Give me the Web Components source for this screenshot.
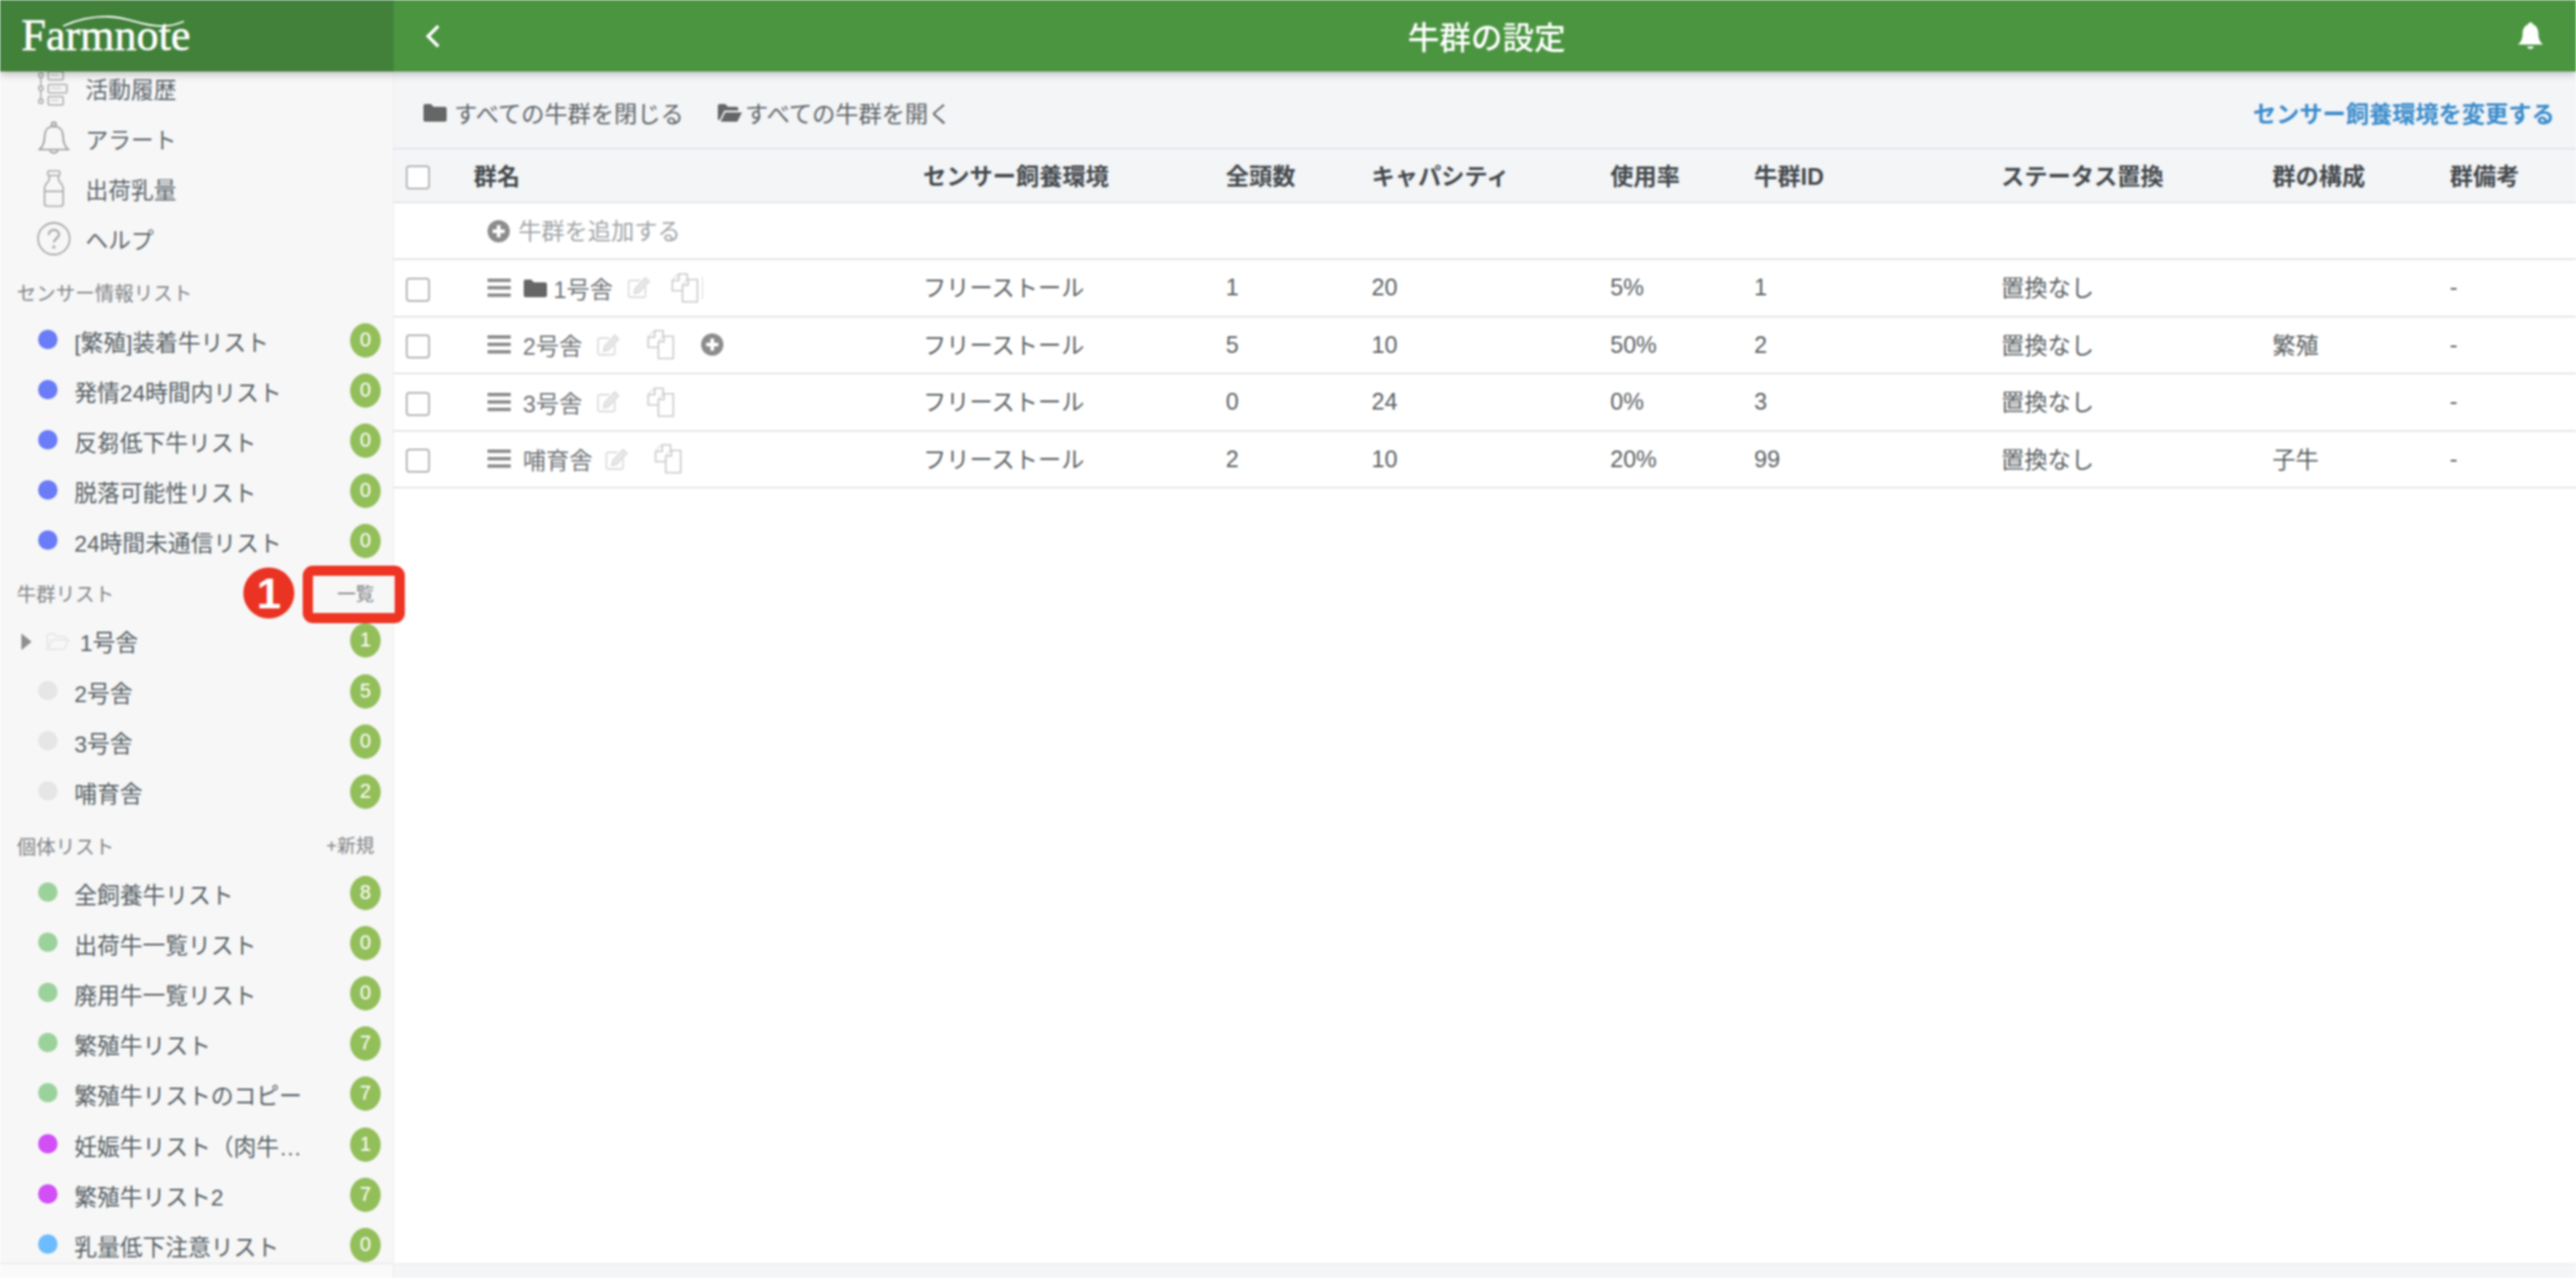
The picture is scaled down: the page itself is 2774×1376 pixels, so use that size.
<!DOCTYPE html>
<html lang="ja"><head><meta charset="utf-8"><title>牛群の設定</title>
<style>
html,body{margin:0;padding:0;height:100%;overflow:hidden;background:#fff}
body{font-family:"Liberation Sans","Noto Sans CJK JP",sans-serif;color:#555}
</style></head><body>
<farm-app>
  <farm-topbar slot="top" title="牛群の設定"></farm-topbar>
  <farm-sidebar slot="side">
    <side-nav icon="timeline">活動履歴</side-nav>
    <side-nav icon="bell">アラート</side-nav>
    <side-nav icon="bottle">出荷乳量</side-nav>
    <side-nav icon="help">ヘルプ</side-nav>
    <side-head h="56">センサー情報リスト</side-head>
    <side-row color="#6a7cf7" count="0">[繁殖]装着牛リスト</side-row>
    <side-row color="#6a7cf7" count="0">発情24時間内リスト</side-row>
    <side-row color="#6a7cf7" count="0">反芻低下牛リスト</side-row>
    <side-row color="#6a7cf7" count="0">脱落可能性リスト</side-row>
    <side-row color="#6a7cf7" count="0">24時間未通信リスト</side-row>
    <side-head h="52" action="一覧" marked>牛群リスト</side-head>
    <side-row folder count="1" style="height:55.500px">1号舎</side-row>
    <side-row color="#e6e6e6" count="5">2号舎</side-row>
    <side-row color="#e6e6e6" count="0">3号舎</side-row>
    <side-row color="#e6e6e6" count="2">哺育舎</side-row>
    <side-head h="54" action="+新規">個体リスト</side-head>
    <side-row color="#9bd29b" count="8">全飼養牛リスト</side-row>
    <side-row color="#9bd29b" count="0">出荷牛一覧リスト</side-row>
    <side-row color="#9bd29b" count="0">廃用牛一覧リスト</side-row>
    <side-row color="#9bd29b" count="7">繁殖牛リスト</side-row>
    <side-row color="#9bd29b" count="7">繁殖牛リストのコピー</side-row>
    <side-row color="#d14ff5" count="1">妊娠牛リスト（肉牛…</side-row>
    <side-row color="#d14ff5" count="7">繁殖牛リスト2</side-row>
    <side-row color="#6cbcff" count="0">乳量低下注意リスト</side-row>
  </farm-sidebar>
  <herd-main slot="main">
    <herd-toolbar></herd-toolbar>
    <herd-row head name="群名" env="センサー飼養環境" total="全頭数" cap="キャパシティ" rate="使用率" hid="牛群ID" status="ステータス置換" comp="群の構成" note="群備考"></herd-row>
    <herd-add>牛群を追加する</herd-add>
    <herd-row name="1号舎" folder caret gap1="15" gap2="21" env="フリーストール" total="1" cap="20" rate="5%" hid="1" status="置換なし" comp="" note="-"></herd-row>
    <herd-row name="2号舎" plus gap1="15" gap2="28" env="フリーストール" total="5" cap="10" rate="50%" hid="2" status="置換なし" comp="繁殖" note="-"></herd-row>
    <herd-row name="3号舎" gap1="15" gap2="28" env="フリーストール" total="0" cap="24" rate="0%" hid="3" status="置換なし" comp="" note="-"></herd-row>
    <herd-row name="哺育舎" gap1="13" gap2="27" env="フリーストール" total="2" cap="10" rate="20%" hid="99" status="置換なし" comp="子牛" note="-"></herd-row>
  </herd-main>
</farm-app>
<script>
const ICON={
 timeline:`<svg width="34" height="38" viewBox="0 0 34 38" fill="none" stroke="#aaa" stroke-width="1.6"><path d="M3 5v28"/><circle cx="3" cy="5" r="2.4" fill="#f7f7f7"/><circle cx="3" cy="19" r="2.4" fill="#f7f7f7"/><circle cx="3" cy="33" r="2.4" fill="#f7f7f7"/><rect x="11" y="1" width="16" height="9" rx="1"/><rect x="11" y="15" width="20" height="9" rx="1"/><rect x="11" y="28" width="16" height="9" rx="1"/><path d="M14 5h8M14 19h11M14 32h8" stroke="#ccc"/></svg>`,
 bell:`<svg width="34" height="38" viewBox="0 0 34 38" fill="none" stroke="#999" stroke-width="1.7"><circle cx="17" cy="4" r="2.4"/><path d="M17 6c-7 0-10 5-10 11 0 7-2 11-5.500 14h31C29 28 27 24 27 17c0-6-3-11-10-11z"/><path d="M13 32c.5 3.500 7.500 3.500 8 0"/></svg>`,
 bottle:`<svg width="34" height="40" viewBox="0 0 34 40" fill="none" stroke="#aaa" stroke-width="1.7"><rect x="10.500" y="1" width="13" height="5" rx="1.500"/><path d="M12 6v4c0 3-5 5-5 9v17c0 2 1 3 3 3h14c2 0 3-1 3-3V19c0-4-5-6-5-9V6"/><path d="M7 23h20"/></svg>`,
 help:`<svg width="38" height="38" viewBox="0 0 38 38"><circle cx="19" cy="19" r="17" fill="none" stroke="#aaa" stroke-width="1.800"/><path d="M13.500 15c0-3.500 2.500-5.500 5.500-5.500s5.500 2 5.500 5c0 4-5.500 4.500-5.500 8.500" fill="none" stroke="#aaa" stroke-width="2.400"/><circle cx="19" cy="28" r="1.800" fill="#aaa"/></svg>`,
 folder:`<svg width="25" height="20" viewBox="0 0 25 20"><path d="M0 3a2 2 0 0 1 2-2h6l3 3h12a2 2 0 0 1 2 2v12a2 2 0 0 1-2 2H2a2 2 0 0 1-2-2z" fill="#666"/></svg>`,
 open:`<svg width="26" height="20" viewBox="0 0 26 20"><path d="M0 3a2 2 0 0 1 2-2h6l3 3h9a2 2 0 0 1 2 2v2H7L2 18H0z" fill="#666"/><path d="M8 10h18l-5 10H3z" fill="#666"/></svg>`,
 lightOpen:`<svg width="25" height="20" viewBox="0 0 25 20" fill="none" stroke="#e4e4e4" stroke-width="1.500"><path d="M1 18V3a1.500 1.500 0 0 1 1.500-1.500h6l3 3h8A1.500 1.500 0 0 1 21 6v2"/><path d="M1 18l5-10h18l-5 10z"/></svg>`,
 edit:`<svg width="26" height="25" viewBox="0 0 26 25" fill="none" stroke="#ddd" stroke-width="1.800"><path d="M20 12v9a2 2 0 0 1-2 2H4a2 2 0 0 1-2-2V7a2 2 0 0 1 2-2h10"/><path d="M9 14l-1 5 5-1L24 6l-4-4z" fill="#e8e8e8"/></svg>`,
 copy:`<svg width="32" height="34" viewBox="0 0 32 34" fill="#fff" stroke="#c9c9c9" stroke-width="1.600"><path d="M2 20V9l7-7h9v18z"/><path d="M2 9h7V2"/><path d="M13 32V14l6-6h10v24z"/><path d="M13 14h6V8"/></svg>`,
 plus:`<svg width="24" height="24" viewBox="0 0 24 24"><circle cx="12" cy="12" r="12" fill="#8c8c8c"/><path d="M12 5.500v13M5.500 12h13" stroke="#fff" stroke-width="4"/></svg>`,
 burger:`<svg width="25" height="20" viewBox="0 0 25 20" fill="#888"><rect y="0" width="25" height="3.600"/><rect y="8" width="25" height="3.600"/><rect y="16" width="25" height="3.600"/></svg>`
};
class Base extends HTMLElement{
  connectedCallback(){ if(this.shadowRoot) return; this.attachShadow({mode:'open'}).innerHTML=this.view(); }
  a(n,d=''){ return this.hasAttribute(n)?this.getAttribute(n):d; }
}
const def=(n,view)=>customElements.define(n,class extends Base{view(){return view.call(this)}});

def('farm-app',function(){return `<style>
:host{display:grid;grid-template-rows:77px 1fr;grid-template-columns:424px 1fr;width:2774px;height:1376px;overflow:hidden;filter:blur(.9px)}
.t{grid-column:1/3;position:relative;z-index:3;box-shadow:0 2px 9px rgba(0,0,0,.28)}
.s,.m{min-height:0;display:flex;flex-direction:column;min-width:0}
.s{position:relative;z-index:2}
</style><div class="t"><slot name="top"></slot></div><div class="s"><slot name="side"></slot></div><div class="m"><slot name="main"></slot></div>`});

def('farm-topbar',function(){return `<style>
:host{display:grid;grid-template-columns:424px 1fr;height:77px;color:#fff}
.logo{background:#41813a;position:relative;padding-left:23px;display:flex;align-items:flex-end;font:47.500px/1 "Liberation Serif",serif;padding-bottom:15px;box-sizing:border-box;-webkit-text-stroke:.6px #fff}
.logo svg{position:absolute;left:66px;top:14px}
.bar{background:#4b9541;display:grid;grid-template-columns:86px 1fr 86px;align-items:center}
h1{margin:0;text-align:center;font:500 34px "Liberation Sans","Noto Sans CJK JP",sans-serif;padding-left:4px}
.back{padding-left:33px;display:flex}
.bell{display:flex;justify-content:flex-end;padding-right:35px}
</style><div class="logo">Farmnote<svg width="134" height="18" viewBox="0 0 134 18" fill="none"><path d="M2 14C20 6 38 3.500 52 4c24 1 34 11 58 10 8 0 15-2 22-5" stroke="#fff" stroke-width="1.800"/></svg></div>
<div class="bar"><span class="back"><svg width="18" height="30" viewBox="0 0 18 30" fill="none"><path d="M15 4L4 15l11 11" stroke="#fff" stroke-width="3.600"/></svg></span><h1>${this.a('title')}</h1>
<span class="bell"><svg width="28" height="32" viewBox="0 0 28 32"><circle cx="14" cy="3.500" r="2.500" fill="#fff"/><path d="M14 3c-6 0-8.500 5-8.500 10 0 6-2 9.500-5 12h27c-3-2.500-5-6-5-12 0-5-2.500-10-8.500-10z" fill="#fff"/><path d="M10.500 27c.5 3.500 6.500 3.500 7 0z" fill="#fff"/></svg></span></div>`});

def('farm-sidebar',function(){return `<style>
:host{display:flex;flex-direction:column;flex:1;min-height:0;background:#f7f7f7;border-right:1.500px solid #ebebeb;box-sizing:border-box}
.list{flex:1;min-height:0;overflow:visible}
.inner{margin-top:-9px}
.foot{height:16px;flex:none;background:#fafafa;border-top:1.500px solid #e4e4e4;box-sizing:border-box;position:relative}
</style><div class="list"><div class="inner"><slot></slot></div></div><div class="foot"></div>`});

def('side-nav',function(){return `<style>
:host{display:grid;grid-template-columns:92px 1fr;height:54px;align-items:center;font-size:24.500px;color:#5d666c}
.i{display:flex;justify-content:center;padding-left:23px;width:92px;box-sizing:border-box}
</style><span class="i">${ICON[this.a('icon')]}</span><span><slot></slot></span>`});

def('side-head',function(){const marked=this.hasAttribute('marked');return `<style>
:host{display:flex;justify-content:space-between;align-items:center;height:${this.a('h')}px;padding:3px 20px 0 18px;box-sizing:border-box;font-size:21px;color:#808487;position:relative}
.act{font-size:20px;color:#808487}
.box{position:absolute;left:326px;top:-2px;width:110px;height:62px;border:11px solid #ee3524;border-radius:11px;box-sizing:border-box}
.num{position:absolute;left:262px;top:0;width:55px;height:55px;border-radius:50%;background:#ea3323;color:#fff;font:700 47px/55px "Liberation Sans",sans-serif;text-align:center}
</style><span><slot></slot></span><span class="act">${this.a('action')}</span>${marked?'<span class="num">1</span><span class="box"></span>':''}`});

def('side-row',function(){const f=this.hasAttribute('folder');return `<style>
:host{display:flex;align-items:center;height:54.200px;font-size:24.500px;color:#565f65;padding-right:13px;box-sizing:border-box}
.lead{flex:none;width:80px;display:flex;align-items:center}
.lead.f{width:86px}
.d{width:21px;height:21px;border-radius:50%;margin-left:41px;margin-top:-4px;background:${this.a('color')}}
.tri{width:0;height:0;margin-left:23px;border-left:11px solid #8f8f8f;border-top:9px solid transparent;border-bottom:9px solid transparent;margin-right:16px}
.t{flex:1;white-space:nowrap;overflow:hidden}
.b{flex:none;width:33px;height:37px;border-radius:50%;background:#93bf5a;color:#fff;font-size:21.500px;line-height:36px;text-align:center;margin-top:-2px}
</style>${f?`<span class="lead f"><span class="tri"></span>${ICON.lightOpen}</span>`:`<span class="lead"><span class="d"></span></span>`}<span class="t"><slot></slot></span><span class="b">${this.a('count')}</span>`});

def('herd-main',function(){return `<style>
:host{display:flex;flex-direction:column;flex:1;min-height:0;background:#fff;--cols:86px 484px 326px 157px 257px 155px 266px 292px 191px 1fr}
.body{flex:1;min-height:0;overflow:hidden}
.foot{flex:none;height:16px;background:#f3f5f7;border-top:1.500px solid #e9ebee;box-sizing:border-box}
</style><div class="body"><slot></slot></div><div class="foot"></div>`});

def('herd-toolbar',function(){return `<style>
:host{display:flex;align-items:center;height:84px;box-sizing:border-box;background:#f3f5f7;border-bottom:2px solid #e3e6ea;padding:6px 23px 0 32px;font-size:25px;color:#5f6468}
.g{display:flex;align-items:center;gap:3px}
.g+.g{margin-left:37px}
.g:nth-child(2) svg{margin-right:5px}
a{margin-left:auto;color:#3b8ccc;font-weight:700;font-size:25px;text-decoration:none}
</style><span class="g">${ICON.folder}<span>すべての牛群を閉じる</span></span><span class="g">${ICON.open}<span>すべての牛群を開く</span></span><a>センサー飼養環境を変更する</a>`});

const check=`<span class="c"></span>`;
const rowCss=`
:host{display:grid;grid-template-columns:var(--cols);align-items:center;box-sizing:border-box;border-bottom:2px solid #e3e6ea;font-size:25px;color:#5a5f63;white-space:nowrap}
.c{width:26px;height:26px;margin-left:13px;border:2px solid #b5b5b5;border-radius:4px;background:#fff;box-sizing:border-box;display:block;margin-top:4px}
.up{padding-bottom:3px}
`;
def('herd-row',function(){
  const head=this.hasAttribute('head');
  const cjk=k=>head||['env','status','comp'].includes(k);
  const cells=['env','total','cap','rate','hid','status','comp','note'].map(k=>`<span${cjk(k)?' class="up"':''}>${this.a(k)}</span>`).join('');
  let name;
  if(head) name=`<span class="up">${this.a('name')}</span>`;
  else name=`<span class="n"><span class="ico" style="margin-right:${this.hasAttribute('folder')?14:13}px">${ICON.burger}</span>${this.hasAttribute('folder')?`<span class="ico" style="margin-right:7px">${ICON.folder}</span>`:''}<span>${this.a('name')}</span><span class="ico e" style="margin-left:${this.a('gap1')}px">${ICON.edit}</span><span class="ico" style="margin-left:${this.a('gap2')}px">${ICON.copy}</span>${this.hasAttribute('caret')?'<span class="caret"></span>':''}${this.hasAttribute('plus')?`<span class="ico" style="margin-left:27px">${ICON.plus}</span>`:''}</span>`;
  return `<style>${rowCss}
:host{height:${head?58:61.500}px;background:${head?'#f3f5f7':'#fff'};${head?'font-weight:700;color:#43484c;':''}}
.n{display:flex;align-items:center;margin-left:15px;color:#707478}
.ico{display:flex}
.caret{width:1px;height:24px;background:#ddd;margin-left:2px}
</style>${check}${name}${cells}`});

def('herd-add',function(){return `<style>
:host{display:flex;align-items:center;height:61px;box-sizing:border-box;border-bottom:2px solid #e3e6ea;padding-left:101px;gap:9px;font-size:25px;color:#a2a5a8;background:#fff}
svg{display:block}
span{padding-bottom:3px}
</style>${ICON.plus}<span><slot></slot></span>`});
</script>
</body></html>
